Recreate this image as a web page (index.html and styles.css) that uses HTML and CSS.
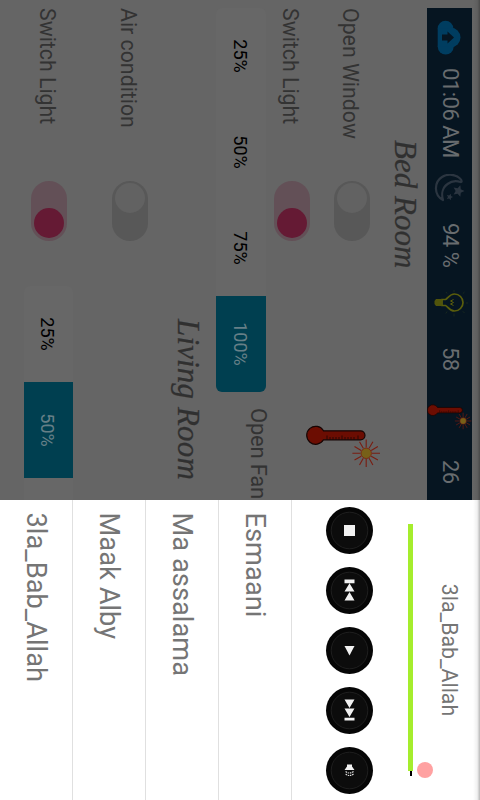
FILE: index.html
```html
<!DOCTYPE html>
<html lang="en">
<head>
<meta charset="utf-8">
<title>Home control</title>
<link rel="stylesheet" href="styles.css">
</head>
<body>
<svg class="defs" width="0" height="0">
  <symbol id="thermometer" viewBox="0 0 44 76">
    <path d="M5.8 57.5V20.5a4.500 4.500 0 0 1 9 0V57.5a9 9 0 1 1-9 0z" fill="#6c0d02" stroke="#160504" stroke-width="1.2"/>
    <path d="M10.5 23h4M12 27h2.5M12 30h2.5M12 33h2.5M12 36h2.5M10.5 39h4M12 42h2.5M12 45h2.5M12 48h2.5M12 51h2.5M10.5 54h4" stroke="#1d0503" stroke-width=".8"/>
    <path d="M28.3 9V1M28.3 20.6v8M22.5 14.8h-8M34.1 14.8h8M31.2 9.8l3.8-6.7M25.4 9.8l-3.8-6.7M31.2 19.8l3.8 6.7M25.4 19.8l-3.8 6.7M33.3 11.9l6.6-3.8M33.3 17.7l6.6 3.8M23.3 11.9l-6.6-3.8M23.3 17.7l-6.6 3.8" stroke="#7a1c10" stroke-width="1.1"/>
    <circle cx="28.3" cy="14.8" r="5.2" fill="#776018" stroke="#7a2510" stroke-width=".9"/>
  </symbol>
</svg>
<div class="screen">
<div class="stage">
  <main class="home">
    <header class="status">
      <svg class="cloud" width="35" height="24" viewBox="0 0 35 24"><g fill="#003d60"><circle cx="8.500" cy="15.500" r="7.800"/><circle cx="17.500" cy="10.500" r="10"/><circle cx="26.500" cy="15.300" r="8"/><path d="M8.500 12h18v11.300h-18z"/></g><path d="M17.500 7l6 6.500h-3V19h-6v-5.500h-3z" fill="#061521"/></svg>
      <span class="stat">01:06 AM</span>
      <svg class="moon" width="28" height="31" viewBox="0 0 28 31"><path d="M5 4.500C0 9-.500 17.500 3 23c5 8 18 8.500 23-1-6 1.800-12.500.500-16-4.500C7 13.500 6.500 9 8 4.500 8.300 3 6.500 3 5 4.500z" fill="none" stroke="#2b3540" stroke-width="2.200" stroke-linejoin="round"/><path d="M17 .500l1.700 3.700 4 .500-3 2.700.800 4-3.500-2-3.500 2 .800-4-3-2.700 4-.500zM23 12l1 2 2.300.300-1.700 1.600.500 2.300-2.100-1.200-2 1.200.400-2.300-1.700-1.600 2.300-.300z" fill="#2b3540"/></svg>
      <span class="stat">94 %</span>
      <svg class="bulb" width="28" height="33" viewBox="0 0 28 33"><g fill="none" stroke="#5a5d0c" stroke-width="1.700"><path d="M9.500 24v-3.500C9 18.500 4 16.500 4 11.500a8.500 8.500 0 0 1 17 0c0 5-5 7-5.500 9V24z"/><path d="M9.500 12.500l1.500 3 1.500-3 1.500 3 1.500-3" stroke-width="1"/></g><path d="M9 24h7v6l-2 1.500h-3L9 30z" fill="#51540b"/><path d="M13-2v2M2 1.500l1.700 1.700M23 1.500l-1.700 1.700M0 12h2M23.500 12h3M2 20l1.500-1M21.500 19l2 1.200" stroke="#18291f" stroke-width="1"/></svg>
      <span class="stat">58</span>
      <svg class="thermo-small" width="26.400" height="45.600"><use href="#thermometer"/></svg>
      <span class="stat">26</span>
    </header>
    <h2 class="room bed">Bed Room</h2>
    <section class="controls">
      <div>
        <div class="row"><span class="label">Open Window</span><i class="switch"></i></div>
        <div class="row second"><span class="label">Switch Light</span><i class="switch on"></i></div>
      </div>
      <svg class="thermo" width="44" height="76"><use href="#thermometer"/></svg>
    </section>
    <section class="fan">
      <div class="levels"><span>25%</span><span>50%</span><span>75%</span><span class="active">100%</span></div>
      <span class="fan-label">Open Fan</span>
    </section>
    <h2 class="room living">Living Room</h2>
    <div class="row air"><span class="label">Air condition</span><i class="switch"></i></div>
    <div class="row last"><span class="label">Switch Light</span><i class="switch on"></i>
      <div class="levels narrow"><span>25%</span><span class="active">50%</span><span></span></div>
    </div>
  </main>
  <aside class="player">
    <div class="song">3la_Bab_Allah</div>
    <div class="seek"><div class="bar"></div><div class="rest"></div><i class="thumb"></i></div>
    <div class="buttons">
      <button><svg viewBox="-23.500 -23.500 47 47"><circle r="18.300"/><path d="M-5.500-5.500h11v11h-11z"/></svg></button>
      <button><svg viewBox="-23.500 -23.500 47 47"><circle r="18.300"/><path d="M-11-5h3.700V5H-11zM-7.300 0L1-5V5zM1.500 0L10-5V5z"/></svg></button>
      <button><svg viewBox="-23.500 -23.500 47 47"><circle r="18.300"/><path d="M-4.500-5L5 0l-9.500 5z"/></svg></button>
      <button><svg viewBox="-23.500 -23.500 47 47"><circle r="18.300"/><path d="M-11-5l8.500 5L-11 5zM-2-5l8.500 5L-2 5zM7.300-5H10V5H7.300z"/></svg></button>
      <button><svg viewBox="-23.500 -23.500 47 47"><circle r="18.300"/><path d="M-6-2.500h2L-.500-5V5L-4 2.500h-2z"/><path class="waves" d="M1-4q3 4 0 8M3.500-4q3 4 0 8"/></svg></button>
    </div>
    <ul class="songs"><li>Esmaani</li><li>Ma assalama</li><li>Maak Alby</li><li>3la_Bab_Allah</li></ul>
  </aside>
  <div class="shade"></div>
</div>
</div>
</body>
</html>
```
FILE: styles.css
```css
* { box-sizing: border-box; }
html, body { margin: 0; width: 480px; height: 800px; overflow: hidden; background: #fff; }
.defs { position: absolute; }
.screen { width: 480px; height: 800px; overflow: hidden; }

/* landscape screen turned a quarter clockwise */
.stage {
  position: relative;
  width: 800px;
  height: 480px;
  display: grid;
  grid-template-columns: 500px 300px;
  transform-origin: 0 0;
  transform: translateX(480px) rotate(90deg);
  font-family: Roboto, "Liberation Sans", sans-serif;
}
.home { overflow: hidden; height: 480px; padding: 8px 0 0 8px; background: #656565; color: #333; }

.status {
  display: grid;
  grid-template-columns: 48px 106px 49px 67px 57px 57px 56px 1fr;
  height: 45px;
  padding-left: 12px;
  background: #061521;
  overflow: hidden;
}
.status svg { display: block; }
.cloud { margin-top: 10.5px; }
.moon { margin-top: 7px; }
.bulb { margin-top: 6px; overflow: visible; }
.stat { font-size: 22px; line-height: 43px; letter-spacing: -.5px; color: #686c6f; white-space: nowrap; }

.room { margin: 0; font: italic 400 31px/36px "Liberation Serif", serif; color: #303030; -webkit-text-stroke: .25px #303030; }
.bed { margin: 4px 0 0 132px; }
.living { margin: 10px 0 0 311px; letter-spacing: .15px; }

.controls { display: flex; margin-top: 5px; }
.row { display: flex; height: 60px; padding-top: 12px; }
.second { height: 56px; }
.label { width: 173px; flex: none; font-size: 21.3px; line-height: 40px; white-space: nowrap; }
.thermo { margin: 1px 0 0 184px; }

.switch { width: 60px; height: 36px; flex: none; padding: 3px 2px; border-radius: 18px; background: #585858; }
.switch::before { content: ""; display: block; width: 30px; height: 30px; border-radius: 50%; background: #626262; }
.on { background: #635057; }
.on::before { margin-left: 25px; background: #651a34; }

.levels { display: flex; height: 50px; width: 384px; flex: none; border-radius: 6px; background: #676767; overflow: hidden; }
.levels span { width: 96px; flex: none; text-align: center; font-size: 18px; line-height: 52px; color: #000; }
.levels .active { background: #003f50; color: #667f87; }
.fan { display: flex; }
.fan-label { margin-left: 16px; font-size: 22px; line-height: 16px; letter-spacing: -.2px; white-space: nowrap; }
.air { margin-top: 10px; height: 78px; }
.last { height: 82px; padding-top: 15px; }
.narrow { height: 49px; width: 260px; margin: -6px 0 0 45px; }

.player { position: relative; height: 480px; background: #fff; color: #757575; }
.song { padding-top: 16px; text-align: center; font-size: 21.3px; line-height: 30px; }
.seek { position: relative; display: flex; align-items: center; margin: 20px 0 0 24px; height: 6px; }
.bar { width: 247px; height: 5px; background: #a5ed2d; }
.rest { width: 5px; height: 2px; background: #000; }
.thumb { position: absolute; left: 238px; top: -19px; width: 16px; height: 16px; border-radius: 50%; background: #ffa1a1; }
.buttons { display: flex; gap: 13px; padding: 35px 0 0 6.5px; }
.buttons button { width: 47px; height: 47px; padding: 0; border: 0; border-radius: 50%; background: #060606; }
.buttons svg { display: block; width: 47px; height: 47px; fill: #f2f2f2; }
.buttons circle { fill: #0c0c0c; stroke: #282828; stroke-width: .7; }
.buttons .waves { fill: none; stroke: #ddd; stroke-width: 1.2; stroke-dasharray: 1.5 .8; }
.songs { list-style: none; margin: 34px 0 0; padding: 0; }
.songs li { height: 73px; padding: 0 0 0 12.5px; border-top: 1px solid #e0e0e0; font-size: 27.3px; line-height: 73px; white-space: nowrap; }

.shade { position: absolute; inset: 0 0 auto; height: 7px; background: linear-gradient(rgba(0,0,0,.28), rgba(0,0,0,.06) 40%, transparent); }
```
